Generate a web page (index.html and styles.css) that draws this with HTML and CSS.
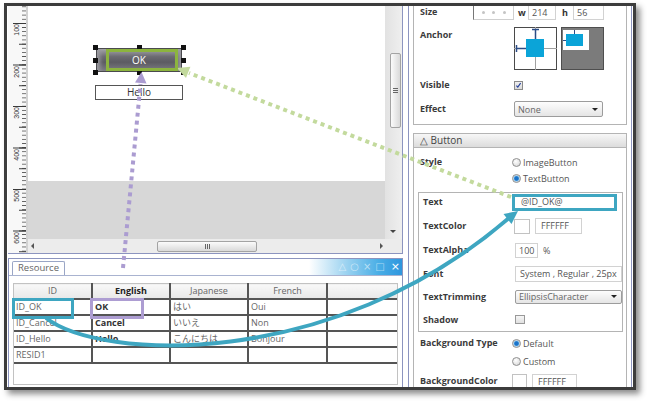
FILE: index.html
```html
<!DOCTYPE html>
<html>
<head>
<meta charset="utf-8">
<link rel="stylesheet" href="styles.css">
</head>
<body>
<div class="frame">
  <div class="leftcol">
    <div class="design">
      <div class="ruler">
        <div class="rl"><span>100</span></div>
        <div class="rl"><span>200</span></div>
        <div class="rl"><span>300</span></div>
        <div class="rl"><span>400</span></div>
        <div class="rl"><span>500</span></div>
        <div class="rl"><span>600</span></div>
      </div>
      <div class="canvas">
        <div class="surface">
          <div class="sel">
            <div class="okbtn">OK</div>
            <i class="h h-tl"></i><i class="h h-tc"></i><i class="h h-tr"></i>
            <i class="h h-ml"></i><i class="h h-mr"></i>
            <i class="h h-bl"></i><i class="h h-bc"></i><i class="h h-br"></i>
          </div>
          <div class="hello">Hello</div>
        </div>
      </div>
      <div class="vscroll">
        <div class="vthumb"><i></i><i></i><i></i></div>
        <div class="arr-down"></div>
      </div>
      <div class="hscroll">
        <div class="arr-left"></div>
        <div class="hthumb"><i></i><i></i><i></i></div>
        <div class="arr-right"></div>
      </div>
      <div class="corner"></div>
    </div>
    <div class="resource">
      <div class="tabbar">
        <div class="tab">Resource</div>
        <div class="tabdeco"><span>△</span><span>○</span><span>×</span><span>□</span><span class="close">×</span></div>
      </div>
      <div class="tablewrap">
        <table class="res">
          <colgroup><col class="c1"><col class="c2"><col class="c3"><col class="c4"><col class="c5"></colgroup>
          <thead>
            <tr><th>ID</th><th class="en">English</th><th>Japanese</th><th>French</th><th></th></tr>
          </thead>
          <tbody>
            <tr><td>ID_OK</td><td class="en">OK</td><td class="ja">はい</td><td>Oui</td><td></td></tr>
            <tr><td>ID_Cancel</td><td class="en">Cancel</td><td class="ja">いいえ</td><td>Non</td><td></td></tr>
            <tr><td>ID_Hello</td><td class="en">Hello</td><td class="ja">こんにちは</td><td>Bonjour</td><td></td></tr>
            <tr><td>RESID1</td><td class="en"></td><td></td><td></td><td></td></tr>
          </tbody>
        </table>
      </div>
    </div>
  </div>

  <div class="props">
    <div class="group group-top">
      <div class="row r-size">
        <div class="lbl lbl-size">Size</div>
        <div class="dots"><i></i><i></i><i></i></div>
        <b class="wh">w</b>
        <div class="field f-w">214</div>
        <b class="wh wh-h">h</b>
        <div class="field f-h">56</div>
      </div>
      <div class="row r-anchor">
        <div class="lbl">Anchor</div>
        <svg class="anchor a1" width="43" height="43" viewBox="0 0 43 43">
          <rect x="0.5" y="0.5" width="42" height="42" fill="#fff" stroke="#4a4a4a"/>
          <line x1="21.5" y1="0" x2="21.5" y2="43" stroke="#a0a0a0"/>
          <line x1="0" y1="21.5" x2="43" y2="21.5" stroke="#a0a0a0"/>
          <rect x="12" y="12" width="18" height="18" fill="#0ba4d8"/>
          <path d="M21.5 2.5v9.5 M18 2.5h7 M2.5 21.5h9.5 M2.5 18v7" stroke="#2c4c86" stroke-width="1.5" fill="none"/>
        </svg>
        <svg class="anchor a2" width="43" height="43" viewBox="0 0 43 43">
          <rect x="0.5" y="0.5" width="42" height="42" fill="#7b7b7b" stroke="#4e4e4e"/>
          <rect x="2" y="3" width="26" height="20" fill="#fff"/>
          <rect x="5" y="7" width="17" height="12" fill="#0ba4d8"/>
          <path d="M13.5 3v4 M2 13.5h3" stroke="#2c4c86" stroke-width="1" fill="none"/>
        </svg>
      </div>
      <div class="row r-visible">
        <div class="lbl">Visible</div>
        <div class="check on"><svg width="9" height="9" viewBox="0 0 9 9"><path d="M1.8 4.6 L3.6 6.6 L7.2 1.4" stroke="#233f9c" stroke-width="1.4" fill="none"/></svg></div>
      </div>
      <div class="row r-effect">
        <div class="lbl">Effect</div>
        <div class="select s-effect"><span>None</span><i class="tri"></i></div>
      </div>
    </div>

    <div class="sec-head">△ Button</div>
    <div class="group group-btn">
      <div class="row r16">
        <div class="lbl">Style</div>
        <div class="radio"></div><span class="rtext">ImageButton</span>
      </div>
      <div class="row r16">
        <div class="lbl"></div>
        <div class="radio on"></div><span class="rtext">TextButton</span>
      </div>
      <div class="inner">
        <div class="row ir1">
          <div class="lbl lbl-in">Text</div>
          <div class="field f-text">@ID_OK@</div>
        </div>
        <div class="row ir2">
          <div class="lbl lbl-in">TextColor</div>
          <div class="swatch sw-tc"></div>
          <div class="field f-hex">FFFFFF</div>
        </div>
        <div class="row ir2">
          <div class="lbl lbl-in">TextAlpha</div>
          <div class="field f-alpha">100</div>
          <span class="pct">%</span>
        </div>
        <div class="row ir3">
          <div class="lbl lbl-in">Font</div>
          <div class="field f-font">System , Regular , 25px</div>
        </div>
        <div class="row ir3">
          <div class="lbl lbl-in">TextTrimming</div>
          <div class="select s-trim"><span>EllipsisCharacter</span><i class="tri"></i></div>
        </div>
        <div class="row ir3">
          <div class="lbl lbl-in">Shadow</div>
          <div class="check c-shadow"></div>
        </div>
      </div>
      <div class="row r18 r-bgtype">
        <div class="lbl">Background Type</div>
        <div class="radio on"></div><span class="rtext">Default</span>
      </div>
      <div class="row r18">
        <div class="lbl"></div>
        <div class="radio"></div><span class="rtext">Custom</span>
      </div>
      <div class="row r18 r-bgcolor">
        <div class="lbl">BackgroundColor</div>
        <div class="swatch sw-bg"></div>
        <div class="field f-hex2">FFFFFF</div>
      </div>
    </div>
  </div>
</div>

<svg class="overlay" width="648" height="402" viewBox="0 0 648 402">
  <line x1="511" y1="197" x2="189" y2="73" stroke="#c3da9d" stroke-width="4" stroke-dasharray="4 4"/>
  <polygon points="177,68 190.4,66.7 186,77.9" fill="#c3da9d"/>
  <line x1="123" y1="268" x2="140.5" y2="84" stroke="#ab9cd1" stroke-width="4" stroke-dasharray="4 4"/>
  <polygon points="141.5,72 146.5,83.5 135,82.5" fill="#ab9cd1"/>
  <rect x="107.5" y="50.5" width="69" height="19" fill="none" stroke="#8cb43e" stroke-width="3"/>
  <rect x="91.5" y="299.5" width="51" height="18" fill="none" stroke="#ad9dd2" stroke-width="3"/>
  <rect x="13.5" y="299.5" width="59" height="18" fill="none" stroke="#3ea6c1" stroke-width="3"/>
  <rect x="513.5" y="195.5" width="102" height="14" fill="none" stroke="#3ea6c1" stroke-width="3"/>
  <path d="M46,318 C100,360 330,372 509,218" fill="none" stroke="#3ea6c1" stroke-width="4"/>
  <polygon points="518,211 511.5,224 503.5,214" fill="#3ea6c1"/>
</svg>
</body>
</html>
```

FILE: styles.css
```css
* { box-sizing: border-box; }
html, body { margin: 0; padding: 0; }
body {
  width: 648px; height: 402px; overflow: hidden; position: relative;
  background: #fff;
  font-family: "Open Sans", "Noto Sans", sans-serif;
  font-size: 9px; color: #444;
}

.frame {
  margin: 3px 0 0 4px;
  width: 632px; height: 387px;
  border: 3px solid #3c3c3c;
  box-shadow: 4px 4px 6px rgba(0,0,0,.45);
  background: #fff;
  display: grid;
  grid-template-columns: 401px 225px;
  overflow: hidden;
}

/* ---------- left column ---------- */
.leftcol { padding-left: 1px; display: flex; flex-direction: column; }

.design {
  width: 395px; height: 248px;
  display: grid;
  grid-template-columns: 20px 357px 17px;
  grid-template-rows: 233px 14px;
  border-right: 1px solid #8c94bf;
  border-bottom: 1px solid #8c94bf;
}

.ruler {
  grid-row: 1 / 3; grid-column: 1;
  padding-top: 18px;
  background-color: #f8f8f8;
  background-image:
    linear-gradient(#d2d2d2, #d2d2d2),
    linear-gradient(#3a3a3a 0 1px, transparent 1px),
    linear-gradient(#3a3a3a 0 1px, transparent 1px),
    linear-gradient(#555 0 1px, transparent 1px);
  background-size: 2px 100%, 13px 41.5px, 7px 20.75px, 4px 4.15px;
  background-position: 18px 0, 5px 17px, 11px 17px, 14px 0.4px;
  background-repeat: no-repeat, repeat-y, repeat-y, repeat-y;
}
.rl { height: 41.5px; }
.rl span {
  display: block; width: 8px;
  margin-left: 5px;
  writing-mode: vertical-rl; transform: rotate(180deg);
  font-family: "Liberation Sans", sans-serif; font-size: 7px; line-height: 8px;
  color: #333;
}

.canvas { grid-column: 2; grid-row: 1; background: #d7d7d7; position: relative; }
.surface { height: 175px; background: #fff; position: relative; }

.sel { position: absolute; left: 67px; top: 42px; width: 88px; height: 24px; }
.okbtn {
  position: absolute; left: 1px; top: 0; right: 1px; bottom: 0;
  border: 1px solid #4a4a4e;
  background: linear-gradient(#a5a5aa 0%, #6b6a71 35%, #5c5b62 60%, #7d7c83 100%);
  box-shadow: inset 6px 0 4px -3px #9a9a9f, inset -6px 0 4px -3px #9a9a9f;
  color: #fff; font-size: 10px; line-height: 22px; text-align: center;
}
.h { position: absolute; width: 5px; height: 5px; background: #111; }
.h-tl { left: -2px; top: -3px; } .h-tc { left: 42px; top: -3px; } .h-tr { left: 86px; top: -3px; }
.h-ml { left: -2px; top: 10px; } .h-mr { left: 86px; top: 10px; }
.h-bl { left: -2px; top: 22px; } .h-bc { left: 42px; top: 22px; } .h-br { left: 86px; top: 22px; }

.hello {
  position: absolute; left: 67px; top: 79px; width: 88px; height: 15px;
  border: 1px solid #555; background: #fff;
  font-size: 10px; line-height: 13px; text-align: center; color: #333;
}

.vscroll {
  grid-column: 3; grid-row: 1;
  background: linear-gradient(to right, #e2e2e2, #efefef);
  display: flex; flex-direction: column; align-items: flex-end;
  padding-right: 1px;
}
.vthumb {
  margin-top: 47px; width: 11px; height: 75px;
  border: 1px solid #a3a3a3; border-radius: 2px;
  background: linear-gradient(to right, #fbfbfb, #d9d9d9);
  display: flex; flex-direction: column; align-items: center; justify-content: center; gap: 1px;
}
.vthumb i { display: block; width: 5px; height: 1px; background: #666; }
.arr-down {
  margin-top: auto; margin-bottom: 6px; align-self: center;
  width: 0; height: 0;
  border-left: 3px solid transparent; border-right: 3px solid transparent; border-top: 3px solid #444;
}

.hscroll {
  grid-column: 2; grid-row: 2;
  background: #ececec;
  display: flex; align-items: center;
}
.arr-left {
  margin-left: 3px; width: 0; height: 0;
  border-top: 3px solid transparent; border-bottom: 3px solid transparent; border-right: 3px solid #555;
}
.hthumb {
  margin-left: 123px; width: 100px; height: 11px;
  border: 1px solid #a3a3a3; border-radius: 2px;
  background: linear-gradient(#fbfbfb, #d9d9d9);
  display: flex; justify-content: center; align-items: center; gap: 1px;
}
.hthumb i { display: block; width: 1px; height: 5px; background: #666; }
.arr-right {
  margin-left: auto; margin-right: 2px; width: 0; height: 0;
  border-top: 3px solid transparent; border-bottom: 3px solid transparent; border-left: 3px solid #555;
}
.corner { grid-column: 3; grid-row: 2; background: #ececec; }

/* ---------- resource pane ---------- */
.resource {
  margin-top: 4px; width: 395px; height: 129px;
  border: 1px solid #8c94bf; border-bottom: none;
}
.tabbar {
  height: 17px; display: flex; align-items: flex-end;
  border-bottom: 1px solid #a9b3d0;
}
.tab {
  margin-left: 3px; width: 53px; height: 14px;
  border: 1px solid #9aa6c6; border-bottom: none; border-radius: 2px 2px 0 0;
  background: #fff; color: #666; font-size: 9.5px; line-height: 12px; text-align: center;
}
.tabdeco {
  margin-left: auto; align-self: stretch; width: 93px;
  background: linear-gradient(to right, rgba(255,255,255,0) 0%, #a8d8f2 35%, #49aee6 75%, #2f96de 100%);
  display: flex; align-items: center; justify-content: flex-end; gap: 4px;
  color: rgba(255,255,255,.55); font-family: "DejaVu Sans", sans-serif; font-size: 10px; line-height: 14px;
  padding-right: 2px;
}
.tabdeco .close { color: #fff; font-size: 11px; margin-left: 2px; }

.tablewrap {
  margin: 7px 4px 0 4px; height: 102px;
  border: 1px solid #c2c2c2;
  border-top: none;
}
table.res { width: 383px; border-collapse: collapse; table-layout: fixed; }
col.c1 { width: 78px; } col.c2 { width: 78px; } col.c3 { width: 78px; } col.c4 { width: 79px; } col.c5 { width: 70px; }
.res th {
  height: 15px; padding: 0;
  background: linear-gradient(#f8f8f8, #e8e8e8);
  border: 2px solid #555; border-top: 1px solid #c2c2c2; border-left: none;
  font-weight: 400; color: #666; font-size: 9px; line-height: 12px; text-align: center;
}
.res th:last-child { border-right: none; }
.res th.en { font-weight: 700; color: #222; }
.res td {
  height: 16px; padding: 0 0 0 2px;
  border-right: 2px solid #555; border-bottom: 2px solid #555;
  color: #666; font-size: 9px; line-height: 12px;
  white-space: nowrap; overflow: hidden;
}
.res td:last-child { border-right: none; }
.res td.en { font-weight: 700; color: #333; }
.res td.ja { font-family: "Noto Sans CJK JP", sans-serif; }

/* ---------- properties pane ---------- */
.props {
  margin-right: 1px;
  border-left: 1px solid #8c94bf; border-right: 1px solid #8c94bf;
  padding: 0 4px 0 4px;
  overflow: hidden;
}
.group { border: 1px solid #b4b4b4; }
.group-top { margin-top: -8px; padding-top: 1px; }
.row { display: flex; align-items: center; }
.lbl {
  flex: none; width: 98px; padding-left: 6px;
  font-weight: 700; color: #3b3b3b; font-size: 9px; line-height: 14px;
  white-space: nowrap;
}
.lbl-in { width: 96px; padding-left: 4px; }

.r-size { height: 24px; }
.lbl-size { width: 59px; }
.dots {
  width: 41px; height: 15px;
  border: 1px solid #cfcfcf; border-left-color: #777; border-top-color: #777;
  display: flex; align-items: center; justify-content: space-evenly;
}
.dots i { display: block; width: 3px; height: 3px; border-radius: 50%; background: #c4c4c4; }
.wh { font-weight: 700; color: #333; margin-left: 4px; width: 6px; }
.wh-h { margin-left: 6px; }
.field {
  height: 15px; border: 1px solid #d2d2d2; background: #fff;
  color: #555; font-size: 9px; line-height: 13px; padding-left: 3px;
  white-space: nowrap; overflow: hidden;
}
.f-w { margin-left: 4px; width: 28px; }
.f-h { margin-left: 5px; width: 31px; }

.r-anchor { height: 52px; align-items: flex-start; }
.r-anchor .lbl { margin-top: 4px; }
.anchor { display: block; margin-top: 3px; flex: none; }
.a1 { margin-left: 2px; }
.a2 { margin-left: 4px; }

.r-visible { height: 18px; }
.check {
  width: 9px; height: 9px; border: 1px solid #8a8a8a;
  background: linear-gradient(#f0f0f0, #dadada);
  display: flex; align-items: center; justify-content: center;
}
.check svg { display: block; }
.r-visible .check { margin-left: 2px; }
.r-effect { height: 30px; }

.select {
  height: 16px; border: 1px solid #9c9c9c; border-radius: 2px;
  background: linear-gradient(#fdfdfd, #e5e5e5);
  display: flex; align-items: center; justify-content: space-between;
  padding: 0 4px 0 3px; color: #666; font-size: 9px;
}
.tri {
  display: block; width: 0; height: 0;
  border-left: 3px solid transparent; border-right: 3px solid transparent; border-top: 3px solid #222;
}
.s-effect { margin-left: 2px; width: 89px; }

.sec-head {
  margin-top: 8px; height: 15px;
  border: 1px solid #b4b4b4;
  background: linear-gradient(#f7f7f7, #dcdcdc);
  padding-left: 6px; font-size: 10px; line-height: 13px; color: #444;
}
.group-btn { border-top: none; padding-top: 6px; height: 260px; }
.r16 { height: 16px; }
.r18 { height: 18px; }
.radio {
  flex: none; width: 9px; height: 9px; border-radius: 50%;
  border: 1px solid #8f8f8f;
  background: radial-gradient(circle at 40% 35%, #ffffff, #d2d2d2);
}
.radio.on { background: radial-gradient(circle, #1b73c9 0 1.8px, #7cc0ee 2.6px, #e6e6e6 3.4px); }
.rtext { margin-left: 2px; color: #555; font-size: 9px; }

.inner { margin: 6px 3px 0 4px; border: 1px solid #b4b4b4; }
.ir1 { height: 21px; align-items: flex-start; }
.ir1 .lbl { margin-top: 2px; }
.ir2 { height: 24px; }
.ir3 { height: 23px; }
.f-text { width: 102px; padding-left: 5px; height: 14px; margin-top: 2px; line-height: 11px; border-color: #fff; }
.swatch { flex: none; border: 1px solid #c2c2c2; background: #fff; }
.sw-tc { width: 16px; height: 15px; margin-left: -1px; }
.f-hex { margin-left: 5px; width: 47px; height: 16px; padding-left: 5px; }
.f-alpha { width: 23px; }
.pct { margin-left: 5px; color: #555; }
.f-font { width: 107px; padding-left: 4px; height: 16px; }
.s-trim { width: 107px; height: 14px; color: #666; }
.c-shadow { width: 10px; height: 9px; background: linear-gradient(#f6f6f6, #e0e0e0); border-color: #999; }

.r-bgtype { margin-top: 2px; }
.r-bgcolor { margin-top: 2px; align-items: flex-start; }
.r-bgcolor .lbl { margin-top: 2px; }
.sw-bg { width: 15px; height: 15px; margin-top: 2px; }
.f-hex2 { margin-left: 5px; width: 45px; height: 16px; margin-top: 2px; padding-left: 5px; }

/* ---------- overlay ---------- */
.overlay { position: absolute; left: 0; top: 0; pointer-events: none; }
```
